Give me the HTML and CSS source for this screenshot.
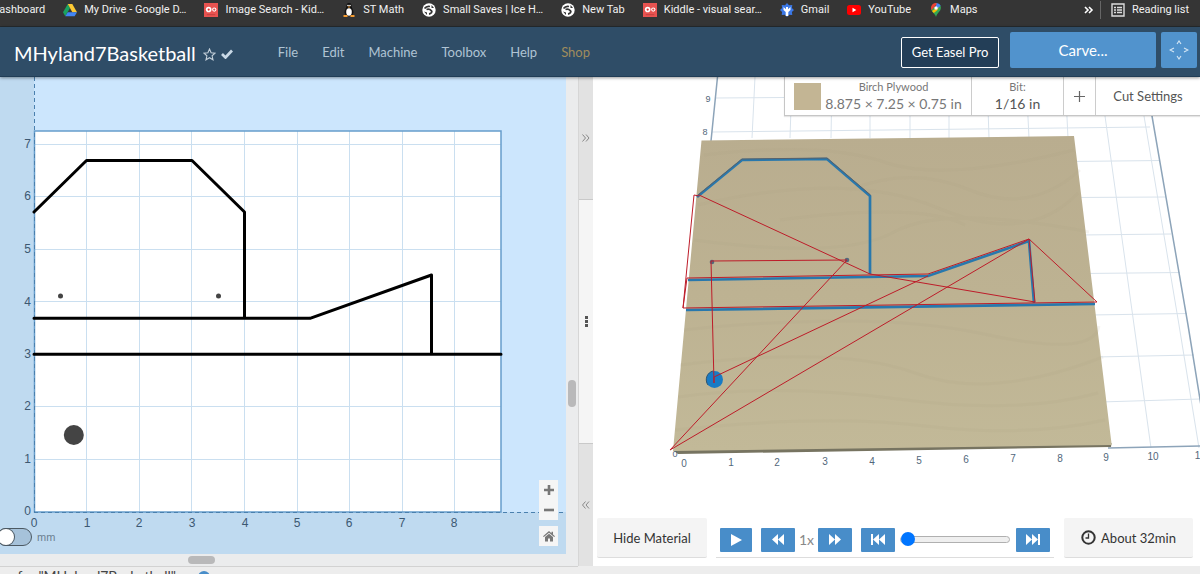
FILE: index.html
```html
<!DOCTYPE html>
<html lang="en">
<head>
<meta charset="utf-8">
<title>MHyland7Basketball</title>
<link rel="stylesheet" href="styles.css">
</head>
<body>
<svg class="defs" aria-hidden="true">
  <symbol id="globe" viewBox="0 0 14 14"><circle cx="7" cy="7" r="6.700" fill="#fff"/><path d="M2.500 5.500C4 3.500 6 3 8 3.500M4.500 6.500c2-.8 4 .2 5 1.300 1 1.200-.5 3-2.500 3.200" fill="none" stroke="#333" stroke-width="1.800"/><path fill="#333" d="M2 8.500l3 1v2.500zM9.500 2l2.500 3h-2.500z"/></symbol>
  <symbol id="kiddle" viewBox="0 0 15 15"><path fill="#e85350" d="M0 0h15v15H0z"/><circle cx="5" cy="7" r="3" fill="#fff"/><circle cx="5" cy="7" r="1.200" fill="#d33"/><circle cx="11" cy="7" r="2.300" fill="#fff"/><circle cx="11" cy="7" r="1.200" fill="#e85350"/><path d="M3 12.500h9" stroke="#b83a3a" stroke-width=".8"/></symbol>
</svg>

<nav class="bookmarks" aria-label="Bookmarks">
  <a class="bookmark bookmark-cut" href="#">Dashboard</a>
  <a class="bookmark" href="#"><svg class="fav" viewBox="0 0 14 14"><path fill="#1aa260" d="M4.800 1 0 9.300l2.300 4L7 5z"/><path fill="#fcc934" d="M4.800 1h4.500L14 9.300H9.300z"/><path fill="#4285f4" d="M4.700 9.300H14l-2.400 4H2.300z"/></svg>My Drive - Google D…</a>
  <a class="bookmark" href="#"><svg class="fav"><use href="#kiddle"/></svg>Image Search - Kid…</a>
  <a class="bookmark" href="#"><svg class="fav" viewBox="0 0 14 14"><path fill="#111" d="M7 0c2 0 2.600 1.700 2.600 3.300 0 1.500 1.900 3.500 1.900 6.200L10 13H4L2.500 9.500c0-2.700 1.900-4.700 1.900-6.200C4.400 1.700 5 0 7 0z"/><ellipse cx="7" cy="9" rx="2.800" ry="3.700" fill="#fff"/><circle cx="6" cy="2.500" r=".8" fill="#fff"/><circle cx="8" cy="2.500" r=".8" fill="#fff"/><path fill="#f49b32" d="M5.600 3.600h2.800L7 5zM1.500 12h4v2h-4zM8.500 12h4v2h-4z"/></svg>ST Math</a>
  <a class="bookmark" href="#"><svg class="fav"><use href="#globe"/></svg>Small Saves | Ice H…</a>
  <a class="bookmark" href="#"><svg class="fav"><use href="#globe"/></svg>New Tab</a>
  <a class="bookmark" href="#"><svg class="fav"><use href="#kiddle"/></svg>Kiddle - visual sear…</a>
  <a class="bookmark" href="#"><svg class="fav" viewBox="0 0 14 14"><path fill="#3b78e7" d="M7 0l2 2.300 3.300-.2-.4 3L14 7l-2.100 2 .4 3-3.300-.3L7 14l-2-2.300-3.300.3.400-3L0 7l2.100-1.900-.4-3 3.300.2z"/><path fill="#fff" d="M3.500 4 6 6.200V4h2v2.200L10.500 4v3L8.300 9v4H5.700V9L3.500 7z"/></svg>Gmail</a>
  <a class="bookmark" href="#"><svg class="fav" viewBox="0 0 14 14"><rect y="2" width="14" height="10" rx="2.500" fill="#f00"/><path fill="#fff" d="M5.500 4.800v4.400L9.300 7z"/></svg>YouTube</a>
  <a class="bookmark" href="#"><svg class="fav" viewBox="0 0 14 14"><path fill="#34a853" d="M7 14C6.300 10.500 2 9 2 5l9.500-2.200C13.300 8 8 9.500 7 14z"/><path fill="#fbbc04" d="M3 8 10.500 2.500 8.500 7 4.800 10z"/><path fill="#4285f4" d="M7 0c2 0 3.800 1 4.600 2.800L6.500 7 7 3.500z"/><path fill="#ea4335" d="M7 0C4 0 2 2.300 2 5l.6 2.300L8 1z"/><circle cx="7" cy="5" r="1.700" fill="#fff"/></svg>Maps</a>
  <button class="bookmark bookmark-more" aria-label="More bookmarks"><svg width="10" height="8" viewBox="0 0 10 8"><path d="m1 1 3 3-3 3m4-6 3 3-3 3" fill="none" stroke="#fff" stroke-width="1.600"/></svg></button>
  <a class="bookmark reading" href="#"><svg class="fav" viewBox="0 0 14 14" fill="none" stroke="#ddd" stroke-width="1.400"><path d="M1 1h12v12H1zM3 4.500h2M6 4.500h5M3 7h2M6 7h5M3 9.500h2M6 9.500h5"/></svg>Reading list</a>
</nav>

<header class="header">
  <h1 class="title">MHyland7Basketball</h1>
  <button class="icon-btn" aria-label="Favorite"><svg width="13" height="13" viewBox="0 0 13 13"><path d="m6.500 1 1.600 3.700 4 .4-3 2.700.9 4-3.500-2.100L3 11.800l.9-4-3-2.700 4-.4z" fill="none" stroke="#c4d0da" stroke-width="1.100"/></svg></button>
  <svg class="saved" width="12" height="10" viewBox="0 0 12 10"><path d="m1 5 3.500 3.500L11 1.500" fill="none" stroke="#c9d9e6" stroke-width="2.700"/></svg>
  <nav class="menu"><a href="#">File</a><a href="#">Edit</a><a href="#">Machine</a><a href="#">Toolbox</a><a href="#">Help</a><a class="shop" href="#">Shop</a></nav>
  <button class="pro">Get Easel Pro</button>
  <button class="carve">Carve...</button>
  <button class="jog" aria-label="Jog"><svg width="20" height="20" viewBox="0 0 20 20"><path d="m8 4 2-3 2 3M8 16l2 3 2-3M5 8l-4 2 4 2M15 8l4 2-4 2" fill="none" stroke="#d6e7f5" stroke-width="1.100"/></svg></button>
</header>

<main class="workspace">
  <section class="editor">
    <div class="canvas">
      <svg class="drawing" viewBox="0 77 566 477" preserveAspectRatio="xMinYMax slice">
        <path fill="#cce6fd" d="M34 77h532v435H34z"/>
        <path fill="#fff" d="M34 131h467v381H34z"/>
        <path class="grid2d" d="M86.500 131v381M139.500 131v381M191.500 131v381M244.500 131v381M297.500 131v381M349.500 131v381M402.500 131v381M454.500 131v381M34 144.500h467M34 196.500h467M34 249.500h467M34 301.500h467M34 354.500h467M34 406.500h467M34 459.500h467"/>
        <path fill="none" stroke="#659dcc" stroke-width="1.500" d="M34.500 512V131h466.500v381z"/>
        <path class="axis" d="M34.500 77v435M34 512.500h532"/>
        <path class="cut" d="M34 212 86.500 160.500H192L244.500 212v106M34 318.300h276L431.500 275v79M34 354.300h467"/>
        <g fill="#444"><circle cx="60.500" cy="296" r="2.500"/><circle cx="218.500" cy="296" r="2.500"/><circle cx="73.800" cy="435" r="10"/></g>
        <g class="ticks y">
          <text x="31" y="148">7</text><text x="31" y="200">6</text><text x="31" y="253">5</text><text x="31" y="306">4</text><text x="31" y="358">3</text><text x="31" y="410">2</text><text x="31" y="463">1</text><text x="31" y="515">0</text>
        </g>
        <g class="ticks x">
          <text x="34" y="527">0</text><text x="87" y="527">1</text><text x="139" y="527">2</text><text x="192" y="527">3</text><text x="245" y="527">4</text><text x="297" y="527">5</text><text x="349" y="527">6</text><text x="402" y="527">7</text><text x="454" y="527">8</text>
        </g>
      </svg>
      <label class="units"><input type="checkbox" class="switch">mm</label>
      <div class="zoom">
        <button aria-label="Zoom in"><svg width="10" height="10"><path d="M5 0v10M0 5h10" stroke="#777" stroke-width="2.600"/></svg></button>
        <button aria-label="Zoom out"><svg width="10" height="10"><path d="M0 5h10" stroke="#777" stroke-width="2.600"/></svg></button>
        <button class="home" aria-label="Home"><svg width="12" height="11" viewBox="0 0 12 11" fill="#777"><path d="M6 0 0 5.200l.8.800L6 1.700l5.200 4.300.8-.8-2-1.700V.8H8.500v1.500z"/><path d="M6 2.800 2 6.100V10.500h3V7.500h2v3h3V6.100z"/></svg></button>
      </div>
    </div>
    <div class="vscroll"><div class="vthumb"></div></div>
    <div class="hscroll"><div class="hthumb"></div></div>
  </section>

  <div class="splitter">
    <button aria-label="Expand editor"><svg width="8" height="8" viewBox="0 0 8 8"><path d="m.5.500 3 3.500-3 3.500m3.500-7L7 4 4 7.500"/></svg></button>
    <div class="grip"><i></i><i></i><i></i></div>
    <button aria-label="Expand preview"><svg width="8" height="8" viewBox="0 0 8 8"><path d="m3.500.500-3 3.500 3 3.500m3.500-7L4 4l3 3.500"/></svg></button>
  </div>

  <section class="preview">
    <svg class="scene" viewBox="593 77 607 435" preserveAspectRatio="xMidYMin slice">
      <defs><linearGradient id="wood" x1="0" y1="0" x2="0" y2="1"><stop offset="0" stop-color="#b9ad8f"/><stop offset=".5" stop-color="#bdb292"/><stop offset="1" stop-color="#c2b998"/></linearGradient></defs>
      <path class="grid3d" d="M755 77l-3 61M792 77l-2 61M832 77l-1 61M870 77v61M910 77v61M949 77v61M987 77l2 61M1026 77l3 61M1065 77l3 61M1099 77l6 39 29 209 17 123M1137 77l7 39 35 209 20 123M716 98l430-3M712 132l438-5M1070 161.500l90-1M1075 197.500l91-.5M1080 235l91-1M1085 273.500l95-1M1090 315l97-1.500M1095 357l99-2M1100 402l100-3"/>
      <path class="bounds" d="M717.500 77l-6.500 64M1144 77l8 39 36 209 21 130"/><path class="bounds" d="M1108 448l92-2"/>
      <path fill="#777461" d="m673 450 5 4 433-7 .5-4z"/>
      <path fill="url(#wood)" d="M701.500 140.500 1074 136l23 189 14.500 118.500v1.500L673 451z"/>
      <g fill="none" stroke="#a99f7b" opacity=".1" stroke-width="3">
        <path d="M704 155q120-14 180 7t190-12M698 205q150-35 240 3t140-15M850 190q60-25 120 0t110-20M694 240q150 20 200-8t195 0M780 220q140-18 185 5M684 330q190-20 300 4t115-8M680 365q160-20 235 8t188-16M678 397q100-14 220 2t200-6M675 430q150-16 250-4t180-6"/>
      </g>
      <path class="carved" d="M697 197 742 160l85-1 43 37v78M688 280l240-4 101-35 5 62M686 310l409-6"/>
      <path fill="none" stroke="#59616a" d="m698 195 44-36 85-1 43.500 37"/>
      <circle cx="714.500" cy="379.500" r="8.500" fill="#187bc5"/><path d="M708 385a9 9 0 0 1 5-14" fill="none" stroke="#34566e"/>
      <g fill="#53687c"><circle cx="712" cy="262" r="2.300"/><circle cx="847" cy="260" r="2.300"/></g>
      <path class="toolpath" d="M699 196l-5-1-11 113 414-6-68-63 6 63-165-28-171-79M683 308l4-30 241-4 101-35L670 450 847 260l-136 1 3 122V377l214-101"/>
      <g class="scene-text">
        <text x="708" y="102">9</text><text x="705" y="135">8</text><text x="675" y="457">0</text>
      </g>
      <g class="scene-text bottom">
        <text x="684" y="467">0</text><text x="731" y="466">1</text><text x="777" y="466">2</text><text x="825" y="465">3</text><text x="872" y="465">4</text><text x="919" y="464">5</text><text x="966" y="463">6</text><text x="1013" y="462">7</text><text x="1060" y="462">8</text><text x="1106" y="461">9</text><text x="1153" y="460">10</text><text x="1200" y="459">11</text>
      </g>
    </svg>
    <div class="material">
      <button class="stock"><span class="swatch"></span><span class="stack"><span class="caption">Birch Plywood</span><span class="value">8.875 × 7.25 × 0.75 in</span></span></button>
      <button class="bit"><span class="stack"><span class="caption">Bit:</span><span class="value dark">1/16 in</span></span></button>
      <button class="add" aria-label="Add bit"><svg width="11" height="11"><path d="M5.500 0v11M0 5.500h11" stroke="#666" stroke-width="1.200"/></svg></button>
      <button class="settings">Cut Settings</button>
    </div>
    <div class="controls">
      <button class="plate hide">Hide Material</button>
      <div class="player">
        <button class="play" aria-label="Play"><svg width="12" height="12"><path d="M1 0v12L12 6z"/></svg></button>
        <button class="key slower" aria-label="Slower"><svg width="12" height="11"><path d="M6 0v11L0 5.500zM12 0v11L6 5.500z"/></svg></button>
        <span class="speed">1x</span>
        <button class="key faster" aria-label="Faster"><svg width="12" height="11"><path d="M0 0v11l6-5.500zM6 0v11l6-5.500z"/></svg></button>
        <button class="key" aria-label="To start"><svg width="14" height="11"><path d="M0 0h2v11H0zM8 0v11L2 5.500zM14 0v11L8 5.500z"/></svg></button>
        <input class="seek" type="range" min="0" max="100" value="0" aria-label="Simulation position">
        <button class="key" aria-label="To end"><svg width="14" height="11"><path d="M12 0h2v11h-2zM0 0v11l6-5.500zM6 0v11l6-5.500z"/></svg></button>
      </div>
      <button class="plate time"><svg width="15" height="15" fill="none" stroke="#333"><circle cx="7.500" cy="7.500" r="6.200" stroke-width="2"/><path d="M7.500 3.500V8H4.500" stroke-width="1.300"/></svg>About 32min</button>
    </div>
  </section>
</main>

<footer class="footer"><div class="workpieces"><span class="workpiece-text">Workpieces for "MHyland7Basketball"</span><button class="info" aria-label="Workpiece info"></button></div></footer>
</body>
</html>
```

FILE: styles.css
```css
* { box-sizing: border-box; }
body { margin: 0; height: 100vh; overflow: hidden; display: flex; flex-direction: column; font-family: Lato, "Liberation Sans", sans-serif; color: #444; background: #ededed; }
button { font: inherit; color: inherit; border: 0; padding: 0; margin: 0; background: none; display: flex; align-items: center; justify-content: center; }
a { color: inherit; text-decoration: none; }
svg { display: block; flex: none; }
.defs { position: absolute; width: 0; height: 0; }

.bookmarks { flex: none; display: flex; align-items: center; gap: 18px; height: 27px; padding: 0 11px 7px 0; background: #353535; border-bottom: 1px solid #252a2e; color: #f1f1f1; font: 11px/18px Roboto, sans-serif; white-space: nowrap; overflow: hidden; }
.bookmark { display: flex; align-items: center; gap: 7px; flex: none; }
.bookmark-cut { margin-left: -8px; }
.bookmark-more { margin-left: auto; }
.fav { width: 14px; height: 14px; }
.reading { border-left: 1px solid #666; padding-left: 10px; margin-left: -12px; }

.header { flex: none; position: relative; z-index: 3; display: flex; align-items: center; height: 50px; padding: 0 3px 0 14px; background: #2f4d67; border-bottom: 1px solid #213d56; box-shadow: 0 1px 3px rgba(0, 0, 0, .4); color: #b0c4d4; }
.title { margin: 2px 7px 0 0; font-size: 20px; line-height: 26px; font-weight: 400; color: #fff; }
.icon-btn { margin-top: 5px; }
.saved { margin: 5px 0 0 5px; }
.menu { display: flex; gap: 24px; margin-left: 45px; font-size: 13px; }
.shop { color: #a08c5c; }
.pro { margin-left: auto; width: 98px; height: 31px; margin-top: 1px; border: 1px solid #fff; border-radius: 2px; background: #233e57; color: #fff; font-size: 13px; }
.carve { width: 146px; height: 36px; margin: 0 5px 3px 11px; background: #5193cd; color: #fff; font-size: 15px; border-radius: 2px; }
.jog { width: 36px; height: 36px; margin-bottom: 3px; background: #5193cd; border-radius: 2px; }

.workspace { flex: 1; min-height: 0; display: flex; }
.editor { flex: 578 1 0; min-width: 0; display: grid; grid-template: minmax(0, 1fr) 12px / minmax(0, 1fr) 12px; background: #ebeced; }
.canvas { position: relative; background: #bfdaf0; overflow: hidden; }
.drawing, .scene { width: 100%; height: 100%; }
.grid2d { stroke: #cadff0; fill: none; }
.axis { stroke: #4a80ae; stroke-dasharray: 4 3; fill: none; }
.cut { stroke: #000; stroke-width: 3; stroke-linecap: round; stroke-linejoin: round; fill: none; }
.ticks { font: 12px "Liberation Sans", sans-serif; fill: #3c5872; }
.y { text-anchor: end; }
.x { text-anchor: middle; }
.units { position: absolute; left: -3px; bottom: 8px; display: flex; align-items: center; gap: 5px; font: 11px/18px "Liberation Sans", sans-serif; color: #6b7f90; }
.switch { appearance: none; margin: 0; width: 35px; height: 18px; border: 1px solid #4c5963; border-radius: 9px; background: #a6c2da; }
.switch::before { content: ""; display: block; width: 16px; height: 16px; border-radius: 50%; background: #fff; box-shadow: 0 0 0 1px #4c5963; }
.zoom { position: absolute; right: 8px; bottom: 8px; width: 19px; }
.zoom button { width: 19px; height: 20px; background: #f5f5f5; }
.zoom .home { margin-top: 6px; }
.vscroll { padding-top: 303px; }
.vthumb { width: 8px; height: 27px; margin: 0 auto; border-radius: 4px; background: #b9b9ba; }
.hscroll { padding: 2px 0 0 188px; }
.hthumb { width: 27px; height: 8px; border-radius: 4px; background: #b9b9ba; }

.splitter { flex: 0 0 15px; display: flex; flex-direction: column; background: #f5f5f5; border-left: 1px solid #d6d6d6; }
.splitter button { flex: 1; background: #e2e2e2; }
.splitter button:first-child { border-bottom: 1px solid #c9c9c9; }
.splitter button:last-child { border-top: 1px solid #c9c9c9; }
.splitter path { fill: none; stroke: #888; }
.grip { flex: 2; display: flex; flex-direction: column; align-items: center; justify-content: center; gap: 1px; }
.grip i { width: 3px; height: 3px; background: #555; }

.preview { flex: 607 1 0; min-width: 0; position: relative; display: flex; flex-direction: column; background: #fff; }
.scene { flex: 1; min-height: 0; }
.grid3d { fill: none; stroke: #d9e3ec; }
.bounds { fill: none; stroke: #8da4b9; stroke-width: 1.5; }
.carved { fill: none; stroke: #2878ad; stroke-width: 2.7; }
.toolpath { fill: none; stroke: #bd1c29; stroke-width: 1; }
.scene-text { font: 9px "Liberation Sans", sans-serif; fill: #52677b; text-anchor: middle; }
.bottom { font-size: 10px; }

.material { position: absolute; top: 0; right: 0; display: flex; height: 39px; background: #fff; border: solid #c6c6c6; border-width: 0 0 1px 1px; box-shadow: 0 1px 1px rgba(0, 0, 0, .1); font-size: 13px; color: #555; }
.material button + button { border-left: 1px solid #ccc; }
.stock { width: 186px; gap: 4px; color: #777; }
.swatch { width: 27px; height: 27px; background: #c3b594; }
.stack { display: flex; flex-direction: column; align-items: center; }
.caption { font-size: 11px; line-height: 16px; color: #777; }
.value { font-size: 14px; line-height: 18px; }
.dark { color: #555; }
.bit { width: 92px; }
.add { width: 32px; }
.settings { width: 105px; }

.controls { flex: none; display: flex; padding: 7px 7px 8px 4px; }
.plate { height: 40px; background: #f4f4f4; border-bottom: 1px solid #ddd; font-size: 13px; color: #333; border-radius: 2px; }
.hide { width: 110px; margin-right: 9px; }
.time { width: 129px; gap: 5px; margin-left: auto; }
.player { display: flex; align-items: center; padding: 4px 4px 0; height: 40px; border-bottom: 1px solid #ddd; }
.player button { height: 24px; background: #488dc9; fill: #fff; border-radius: 1px; }
.play { width: 32px; }
.key { width: 34px; }
.player .slower { margin-left: 9px; }
.speed { width: 23px; text-align: center; font-size: 14px; color: #888; }
.player .faster { margin-right: 9px; }
.seek { appearance: none; width: 110px; height: 14px; margin: 0 6px 0 5px; background: none; }
.seek::-webkit-slider-runnable-track { height: 7px; border: 1px solid #b0b0b0; border-radius: 4px; background: #efefef; }
.seek::-webkit-slider-thumb { appearance: none; width: 14px; height: 14px; margin-top: -5px; border-radius: 50%; background: #0075ff; }

.footer { flex: none; height: 8px; overflow: hidden; }
.workpieces { display: flex; gap: 22px; width: 578px; padding-top: 2px; border-top: 1px solid #d2d2d2; background: #ededed; font-size: 14px; line-height: 14px; }
.workpiece-text { flex: 0 0 176px; min-width: 0; overflow: hidden; display: flex; justify-content: flex-end; white-space: nowrap; }
.info { width: 12px; height: 12px; margin-top: 2px; border-radius: 50%; background: #488dc9; }
```
